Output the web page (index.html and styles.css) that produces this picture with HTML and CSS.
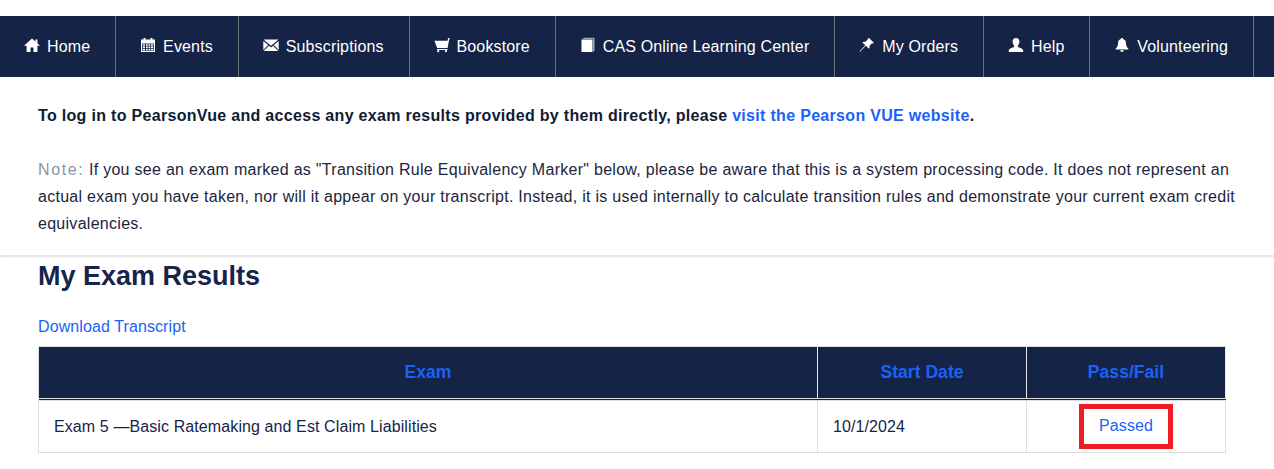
FILE: index.html
```html
<!DOCTYPE html>
<html lang="en">
<head>
  <meta charset="UTF-8" />
  <title>My Exam Results</title>
  <link rel="stylesheet" href="styles.css">
</head>
<body>
  <nav class="main-nav">
    <a href="#" class="nav-item">
      <svg class="nav-icon" viewBox="0 0 16 16"><path d="M8 1.500 0 8.700h2.600V15h3.900v-4.400h3V15h3.900V8.700H16l-2.600-2.400V2.400h-2v2L8 1.500z"/></svg>
      Home
    </a>
    <a href="#" class="nav-item">
      <svg class="nav-icon" viewBox="0 0 16 16"><path fill-rule="evenodd" d="M1 2.500h2.500V1h2v1.500h5V1h2v1.500H15V15H1V2.500zM2.200 6.500v7.300h11.600V6.500H2.200z"/><path d="M3 7.300h2v1.500H3zM6 7.300h1.800v1.500H6zM8.500 7.300h1.800v1.500H8.500zM11 7.300h2v1.500h-2zM3 9.500h2V11H3zM6 9.500h1.800V11H6zM8.500 9.500h1.800V11H8.500zM11 9.500h2V11h-2zM3 11.700h2v1.500H3zM6 11.700h1.800v1.500H6zM8.500 11.700h1.800v1.500H8.500zM11 11.700h2v1.500h-2z"/></svg>
      Events
    </a>
    <a href="#" class="nav-item">
      <svg class="nav-icon" viewBox="0 0 16 16"><path d="M.5 2.500h15L8 8.800.5 2.500zM.3 3.900l4.900 4.100-4.900 5V3.900zM15.700 3.900v9.100l-4.900-5 4.900-4.100zM6 8.700l2 1.700 2-1.700 5.400 5.400H.6L6 8.700z"/></svg>
      Subscriptions
    </a>
    <a href="#" class="nav-item">
      <svg class="nav-icon" viewBox="0 0 16 16"><path d="M15.800 1 15 3.200 13.600 11H3.200L.4 3.800h13.200l.5-2.800z"/><rect x="3" y="12" width="10.500" height="1"/><circle cx="4.200" cy="14.200" r="1.100"/><circle cx="12" cy="14.200" r="1.100"/></svg>
      Bookstore
    </a>
    <a href="#" class="nav-item">
      <svg class="nav-icon" viewBox="0 0 16 16"><path d="M2.500 2 4 .8h10.500v12.700L13 15V2H2.500z" opacity=".6"/><path d="M1.500 2.500H12.500V15H1.500z"/></svg>
      CAS Online Learning Center
    </a>
    <a href="#" class="nav-item">
      <svg class="nav-icon" viewBox="0 0 16 16"><path d="M10.300 1.200 15 5.900l-1.300.7-.7-.3-2.500 2.500c.3 1.200 0 2.300-.6 3L6.800 8.700.9 14.900l-.4-.3 5.800-6.400L3.300 5.400c.8-.7 1.900-.9 3.100-.6l2.500-2.500-.3-.7z"/></svg>
      My Orders
    </a>
    <a href="#" class="nav-item">
      <svg class="nav-icon" viewBox="0 0 16 16"><path d="M8 1c2.300 0 3.600 1.600 3.400 3.900-.1 1.500-.8 3-1.500 3.700v1.300c1.800.7 5.300 1.700 5.300 3.600V15H.8v-1.500c0-1.900 3.500-2.900 5.300-3.600V8.600C5.400 7.900 4.700 6.400 4.600 4.900 4.400 2.600 5.700 1 8 1z"/></svg>
      Help
    </a>
    <a href="#" class="nav-item">
      <svg class="nav-icon" viewBox="0 0 16 16"><path d="M8 1c.7 0 1.200.5 1.200 1.100 2 .6 2.700 2.200 2.800 4.300.1 2.200.8 3.900 2.300 5.100v1H1.700v-1c1.500-1.200 2.200-2.900 2.300-5.100.1-2.100.8-3.700 2.800-4.300C6.800 1.500 7.300 1 8 1zM6.200 13.300h3.600C9.700 14.300 9 15 8 15s-1.700-.7-1.800-1.700z"/></svg>
      Volunteering
    </a>
  </nav>

  <section class="notice">
    <p class="notice-lead">To log in to PearsonVue and access any exam results provided by them directly, please <a href="#">visit the Pearson VUE website</a>.</p>
    <p class="notice-note"><span class="note-label">Note:</span> If you see an exam marked as "Transition Rule Equivalency Marker" below, please be aware that this is a system processing code. It does not represent an actual exam you have taken, nor will it appear on your transcript. Instead, it is used internally to calculate transition rules and demonstrate your current exam credit equivalencies.</p>
  </section>

  <main class="results">
    <h1>My Exam Results</h1>
    <a href="#" class="transcript-link">Download Transcript</a>
    <table class="results-table">
      <thead>
        <tr>
          <th class="col-exam"><a href="#">Exam</a></th>
          <th class="col-date"><a href="#">Start Date</a></th>
          <th class="col-status"><a href="#">Pass/Fail</a></th>
        </tr>
      </thead>
      <tbody>
        <tr>
          <td>Exam 5 —Basic Ratemaking and Est Claim Liabilities</td>
          <td>10/1/2024</td>
          <td class="status-cell"><a href="#" class="status-mark">Passed</a></td>
        </tr>
      </tbody>
    </table>
  </main>
</body>
</html>
```

FILE: styles.css
```css
body {
  font-family: "Liberation Sans", Arial, sans-serif;
  font-size: 16px;
  letter-spacing: 0.1px;
  color: #16244a;
  background-color: #fff;
  margin: 0;
  padding-top: 16px;
}

a {
  color: #1a62f5;
  text-decoration: none;
}

.main-nav {
  display: flex;
  height: 61px;
  background-color: #152347;
}

.nav-item {
  display: flex;
  align-items: center;
  gap: 7px;
  padding: 0 24.8px 0 24px;
  color: #fff;
  letter-spacing: 0.15px;
  border-right: 1px solid #6b6f78;
}

.nav-icon {
  width: 16px;
  height: 16px;
  margin-top: -3px;
  fill: #fff;
  flex: none;
}

.notice {
  padding: 25px 30px 18px 38px;
  border-bottom: 2px solid #e6e6e6;
  box-shadow: 0 1px 2px rgba(0, 0, 0, 0.03);
  line-height: 27px;
  letter-spacing: 0.28px;
}

.notice p {
  margin: 0;
}

.notice-lead {
  font-weight: bold;
  letter-spacing: 0.31px;
  color: #111a33;
  margin-bottom: 27px !important;
}

.notice-lead a {
  color: #1a62f5;
}

.notice-note {
  color: #1c2540;
}

.note-label {
  color: #8c94a3;
  letter-spacing: 1.6px;
}

.results {
  padding: 0 48px 0 38px;
}

h1 {
  font-size: 27px;
  line-height: 36px;
  letter-spacing: 0;
  margin: 1px 0 21px;
}

.transcript-link {
  display: block;
  line-height: 24px;
  margin-bottom: 7px;
}

.results-table {
  width: 100%;
  table-layout: fixed;
  border-collapse: collapse;
  border: 1px solid #ddd;
}

.results-table th {
  box-sizing: border-box;
  height: 53px;
  padding: 0 15px;
  background-color: #152347;
  border-right: 1px solid #e8e8e8;
  border-bottom: 3px double #ddd;
  font-size: 17.6px;
  letter-spacing: 0;
  text-align: center;
}

.col-exam {
  width: 779px;
}

.col-date {
  width: 209px;
}

.results-table td {
  height: 51px;
  padding: 0 15px;
  border-right: 1px solid #ddd;
  color: #16244a;
}

.status-cell {
  text-align: center;
}

.status-mark {
  display: inline-block;
  padding: 5px 15px 6px;
  border: 5px solid #ee1c25;
  line-height: 24px;
  vertical-align: middle;
}
```
